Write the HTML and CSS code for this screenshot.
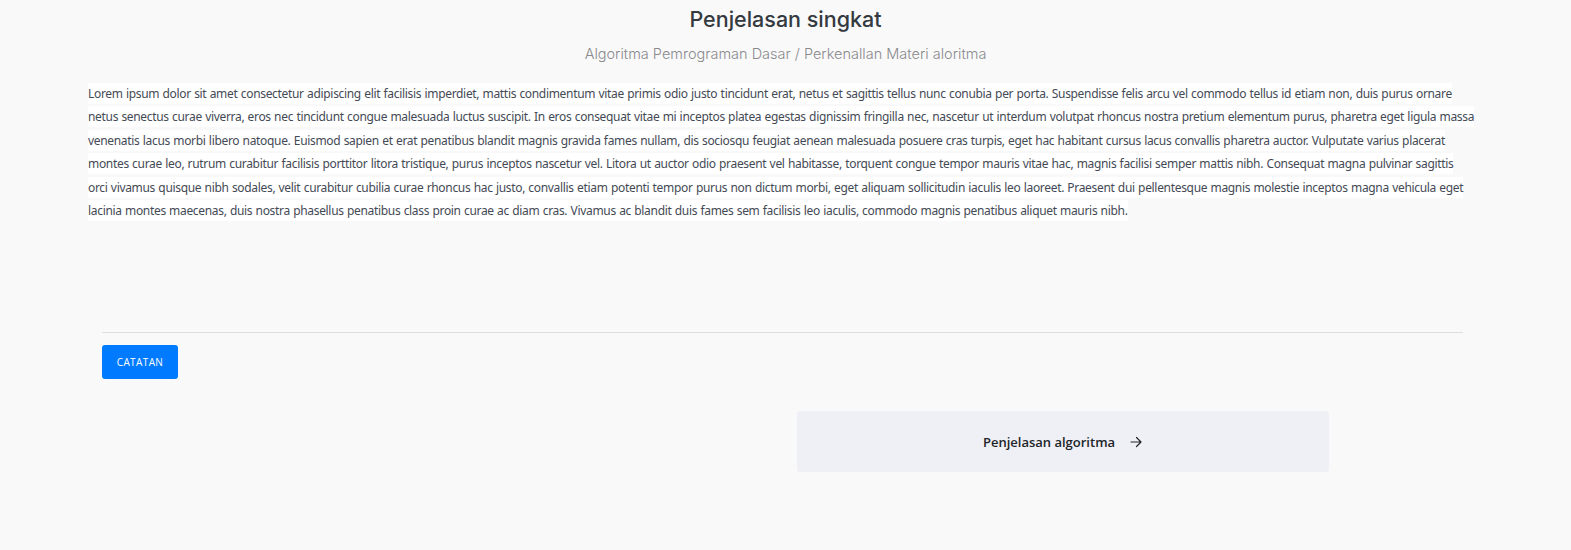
FILE: index.html
```html
<!DOCTYPE html>
<html lang="id">
<head>
<meta charset="utf-8">
<title>Penjelasan singkat</title>
<link rel="stylesheet" href="styles.css">
</head>
<body>
<main class="page">
  <header class="head">
    <h1 class="title">Penjelasan singkat</h1>
    <p class="crumb">Algoritma Pemrograman Dasar / Perkenallan Materi aloritma</p>
  </header>
  <p class="text"><span class="hl">Lorem ipsum dolor sit amet consectetur adipiscing elit facilisis imperdiet, mattis condimentum vitae primis odio justo tincidunt erat, netus et sagittis tellus nunc conubia per porta. Suspendisse felis arcu vel commodo tellus id etiam non, duis purus ornare netus senectus curae viverra, eros nec tincidunt congue malesuada luctus suscipit. In eros consequat vitae mi inceptos platea egestas dignissim fringilla nec, nascetur ut interdum volutpat rhoncus nostra pretium elementum purus, pharetra eget ligula massa venenatis lacus morbi libero natoque. Euismod sapien et erat penatibus blandit magnis gravida fames nullam, dis sociosqu feugiat aenean malesuada posuere cras turpis, eget hac habitant cursus lacus convallis pharetra auctor. Vulputate varius placerat montes curae leo, rutrum curabitur facilisis porttitor litora tristique, purus inceptos nascetur vel. Litora ut auctor odio praesent vel habitasse, torquent congue tempor mauris vitae hac, magnis facilisi semper mattis nibh. Consequat magna pulvinar sagittis<br>orci vivamus quisque nibh sodales, velit curabitur cubilia curae rhoncus hac justo, convallis etiam potenti tempor purus non dictum morbi, eget aliquam sollicitudin iaculis leo laoreet. Praesent dui pellentesque magnis molestie inceptos magna vehicula eget<br>lacinia montes maecenas, duis nostra phasellus penatibus class proin curae ac diam cras. Vivamus ac blandit duis fames sem facilisis leo iaculis, commodo magnis penatibus aliquet mauris nibh.</span></p>
  <section class="foot">
    <hr class="rule">
    <button class="btn" type="button">CATATAN</button>
    <div class="nav">
      <a class="next" href="#">Penjelasan algoritma
        <svg class="arrow" width="14" height="14" viewBox="0 0 14 14" fill="none" stroke="#212529" stroke-width="1.2" stroke-linecap="round" stroke-linejoin="round"><path d="M2 7h10M7.5 2.5L12 7l-4.5 4.5"/></svg>
      </a>
    </div>
  </section>
</main>
</body>
</html>
```

FILE: styles.css
```css
html, body {
  margin: 0;
  padding: 0;
  background: #f9f9f9;
}
.page {
  display: flex;
  flex-direction: column;
}
.head {
  display: flex;
  flex-direction: column;
  align-items: center;
  padding-top: 4px;
}
.title {
  margin: 0;
  font-family: "Inter", "Noto Sans", sans-serif;
  font-weight: 500;
  font-size: 21.5px;
  line-height: 30px;
  color: #343a40;
}
.crumb {
  margin: 10px 0 0;
  font-family: "Inter", "Noto Sans", sans-serif;
  font-weight: 300;
  font-size: 14.5px;
  line-height: 20px;
  color: #8a8a8d;
}
.text {
  margin: 18px 0 0;
  padding: 0 86px 0 88px;
  font-family: "Noto Sans", sans-serif;
  font-size: 12px;
  line-height: 23.4px;
  color: #444a55;
  letter-spacing: -0.32px;
  word-spacing: 0.5px;
}
.hl {
  background: #ffffff;
  padding: 2px 0;
}
.foot {
  display: flex;
  flex-direction: column;
  padding: 0 108px 0 102px;
  margin-top: 110px;
}
.rule {
  margin: 0;
  border: 0;
  border-top: 1px solid #dedede;
  width: 100%;
}
.btn {
  align-self: flex-start;
  margin-top: 12px;
  width: 76px;
  height: 34px;
  border: 0;
  border-radius: 3px;
  background: #007bff;
  color: #ffffff;
  font-family: "Open Sans", sans-serif;
  font-size: 10px;
  letter-spacing: 0.4px;
  padding: 0;
}
.nav {
  display: flex;
  justify-content: flex-end;
  margin-top: 32px;
  padding-right: 134px;
}
.next {
  display: flex;
  align-items: center;
  justify-content: center;
  gap: 14px;
  width: 532px;
  height: 61px;
  background: #eff0f5;
  border-radius: 3px;
  text-decoration: none;
  color: #212529;
  font-family: "Open Sans", sans-serif;
  font-weight: 600;
  font-size: 13px;
}
.arrow {
  display: block;
}
```
